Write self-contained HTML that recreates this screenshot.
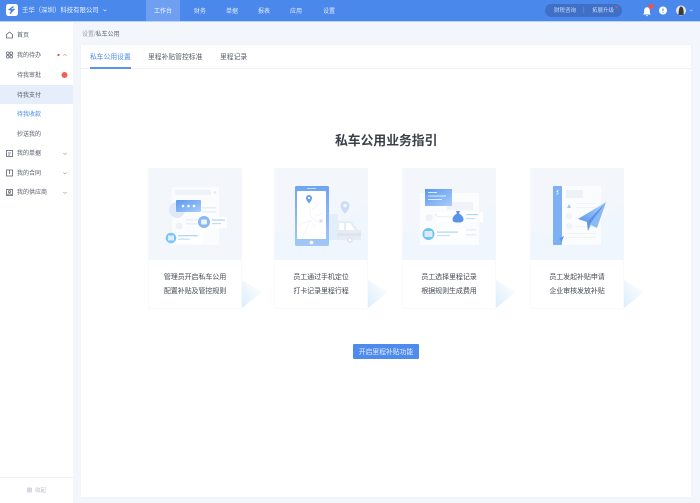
<!DOCTYPE html>
<html><head><meta charset="utf-8">
<style>
html,body{margin:0;padding:0;width:700px;height:503px;overflow:hidden;background:#f3f7fb}
body{font-family:"Liberation Sans","Noto Sans CJK SC",sans-serif;position:relative}
.t{position:absolute;white-space:nowrap;filter:blur(.25px)}
.c{text-align:center}
.b{position:absolute}
.s{font-size:6px;line-height:10px;color:#565d69;left:17px}
.n{font-size:6px;line-height:10px;color:#e4ecfb;top:7px;width:34px;text-align:center}
.g{font-size:7px;line-height:13.500px;color:#444953;text-align:center;width:94px;top:271px;letter-spacing:-.08px}
svg{position:absolute;left:0;top:0;filter:blur(.35px)}
</style></head><body>
<div class="b" style="left:0;top:0;width:700px;height:21px;background:#4a88ec"></div>
<div class="b" style="left:0;top:21px;width:700px;height:1px;background:#bcd4f7"></div>
<div class="b" style="left:146px;top:0;width:34px;height:21px;background:#6f9ff0"></div>
<div class="b" style="left:545px;top:4px;width:77px;height:13px;border-radius:7px;background:#3f70c6"></div>
<div class="b" style="left:0;top:22px;width:73px;height:481px;background:#fff"></div>
<div class="b" style="left:0;top:85px;width:73px;height:19px;background:#e6eefb"></div>
<div class="b" style="left:0;top:477px;width:73px;height:1px;background:#eef0f4"></div>
<div class="b" style="left:81px;top:45px;width:610px;height:452px;background:#fff;box-shadow:0 0 2px #e8edf4"></div>
<div class="b" style="left:81px;top:68px;width:610px;height:1px;background:#eef1f8"></div>
<div class="b" style="left:90px;top:67px;width:41px;height:1.500px;background:#5a93ee"></div>
<div class="b" style="left:353px;top:344px;width:66px;height:15px;background:#4f8bec;border-radius:1px"></div>

<svg width="700" height="503" viewBox="0 0 700 503">
<defs>
<linearGradient id="f" x1="0" y1="1" x2="1" y2="0"><stop offset="0" stop-color="#dcecfc"/><stop offset=".55" stop-color="#f1f8fe"/><stop offset="1" stop-color="#ffffff"/></linearGradient>
<linearGradient id="bl" x1="0" y1="0" x2="1" y2="1"><stop offset="0" stop-color="#5b97ef"/><stop offset="1" stop-color="#a9cdf8"/></linearGradient>
<linearGradient id="ph" x1="0" y1="0" x2="0" y2="1"><stop offset="0" stop-color="#6ea5f2"/><stop offset="1" stop-color="#a3c8f7"/></linearGradient>
<linearGradient id="pl" x1="1" y1="0" x2="0" y2="1"><stop offset="0" stop-color="#b8d7fa"/><stop offset="1" stop-color="#5d98ef"/></linearGradient>
</defs>

<!-- logo -->
<rect x="6" y="4" width="12" height="12" rx="2.500" fill="#fff"/>
<path d="M13.500 6.500L9.500 9.500L13 10L10 13.500M14.500 9L11 11.500" fill="none" stroke="#3f7fe6" stroke-width="1.400"/>
<path d="M103.500 9.500L105 11L106.500 9.500" fill="none" stroke="#dbe7fb" stroke-width=".7"/>

<!-- header right -->
<rect x="583.500" y="7" width=".6" height="6" fill="#6d92d6"/>
<circle cx="616.500" cy="7" r="1" fill="#f0524c"/>
<path d="M643 14.500h8c-1.200-1-1.200-2-1.200-4 0-2-1.200-3.300-2.800-3.300s-2.800 1.300-2.800 3.300c0 2 0 3-1.200 4zM646 15.200h2a1 1 0 0 1-2 0z" fill="#fff"/>
<circle cx="651" cy="6.500" r="2.600" fill="#f0524c"/>
<circle cx="663" cy="10.500" r="4" fill="#fff"/>
<path d="M663 8.500v2.600M663 12v.8" stroke="#4a88ec" stroke-width="1.100"/>
<circle cx="681" cy="10.500" r="5" fill="#e6e4e2"/>
<path d="M678.500 15c.2-3 .3-8 2.500-8.500 2.500 0 3 5 2.500 8.500z" fill="#3b3a3c"/>
<path d="M690 9.800L691.300 11L692.600 9.800" fill="none" stroke="#cfdffa" stroke-width=".6"/>

<!-- sidebar icons -->
<g fill="none" stroke="#5d6470" stroke-width=".8">
<path d="M6.500 34.500L9.500 32L12.500 34.500V38H6.500z"/>
<rect x="6.500" y="52" width="2.500" height="2.500" rx=".6"/><rect x="10" y="52" width="2.500" height="2.500" rx=".6"/><rect x="6.500" y="55.500" width="2.500" height="2.500" rx=".6"/><rect x="10" y="55.500" width="2.500" height="2.500" rx=".6"/>
<rect x="6.500" y="150.500" width="6" height="6"/><path d="M8 153h3M8 155h2"/>
<rect x="6.500" y="170" width="6" height="6"/><path d="M9.500 170v4"/>
<rect x="6.500" y="189.500" width="6" height="6"/><circle cx="9.500" cy="191.700" r="1"/><path d="M7.500 195c.5-1.500 3.500-1.500 4 0"/>
</g>
<circle cx="58.500" cy="55" r="1.100" fill="#ee4d47"/>
<g fill="none" stroke="#9aa1ad" stroke-width=".6">
<path d="M63.300 55.800L65 54.300L66.700 55.800"/>
<path d="M63.300 153L65 154.500L66.700 153"/>
<path d="M63.300 172.500L65 174L66.700 172.500"/>
<path d="M63.300 192L65 193.500L66.700 192"/>
</g>
<circle cx="64.500" cy="75" r="3" fill="#f0605a"/>
<rect x="27" y="487.500" width="5" height="5" rx=".8" fill="#d6d9e1"/>

<!-- cards -->
<g id="cards">
<path d="M242 308V280L262 292z" fill="url(#f)"/>
<path d="M368 308V280L388 292z" fill="url(#f)"/>
<path d="M496 308V280L516 292z" fill="url(#f)"/>
<path d="M624 308V280L644 292z" fill="url(#f)"/>
<rect x="148" y="168" width="94" height="141" fill="#fff"/>
<rect x="274" y="168" width="94" height="141" fill="#fff"/>
<rect x="402" y="168" width="94" height="141" fill="#fff"/>
<rect x="530" y="168" width="94" height="141" fill="#fff"/>
<rect x="148" y="168" width="94" height="92" fill="#f3f7fc"/>
<rect x="274" y="168" width="94" height="92" fill="#f3f7fc"/>
<rect x="402" y="168" width="94" height="92" fill="#f3f7fc"/>
<rect x="530" y="168" width="94" height="92" fill="#f3f7fc"/>
<path d="M274 260V232C310 240 345 225 368 203V260z" fill="#eff6fd"/>
<path d="M402 260V232C438 240 473 225 496 203V260z" fill="#eff6fd"/>
<path d="M530 260V232C566 240 601 225 624 203V260z" fill="#eff6fd"/>
<rect x="148.500" y="168.500" width="93" height="140" fill="none" stroke="#f5f7fb" stroke-width=".6"/>
<rect x="274.500" y="168.500" width="93" height="140" fill="none" stroke="#f5f7fb" stroke-width=".6"/>
<rect x="402.500" y="168.500" width="93" height="140" fill="none" stroke="#f5f7fb" stroke-width=".6"/>
<rect x="530.500" y="168.500" width="93" height="140" fill="none" stroke="#f5f7fb" stroke-width=".6"/>
</g>

<!-- illustration 1 -->
<rect x="172" y="187" width="47" height="58" fill="#fafcfe"/>
<rect x="175" y="190" width="36" height="5" fill="#eef3fa"/>
<circle cx="215" cy="192.500" r="1.500" fill="#e7eef8"/>
<circle cx="177" cy="210" r="8" fill="#dfe9f8"/>
<rect x="202" y="207" width="14" height="1.500" fill="#e7eff9"/><rect x="202" y="211" width="14" height="1.500" fill="#e7eff9"/>
<circle cx="179" cy="226" r="3.500" fill="#edf1f8"/>
<rect x="186" y="219" width="14" height="1.500" fill="#e9f0f9"/><rect x="186" y="223" width="14" height="1.500" fill="#e9f0f9"/>
<rect x="176" y="200" width="25" height="12" rx="1" fill="url(#bl)"/>
<circle cx="183" cy="206" r="1.300" fill="#fff"/><circle cx="188.500" cy="206" r="1.300" fill="#fff"/><circle cx="194" cy="206" r="1.300" fill="#fff"/>
<rect x="206" y="217" width="21" height="11" fill="#fff"/>
<rect x="212" y="219.500" width="13" height="1.200" fill="#a9d0f6"/><rect x="212" y="223" width="9" height="1.200" fill="#bfdcf8"/>
<circle cx="204" cy="222" r="6" fill="#8ab6f2"/><rect x="201" y="219.500" width="6" height="5" rx="1" fill="#e8f1fc"/>
<rect x="173" y="233" width="30" height="10" fill="#fff"/>
<rect x="178" y="235" width="20" height="1.300" fill="#b3d6f7"/><rect x="178" y="238.500" width="12" height="1.300" fill="#c5e0f9"/>
<circle cx="171" cy="238" r="5.300" fill="#78c7f6"/><rect x="168" y="235.500" width="6" height="5" rx=".6" fill="#dceefc"/>

<!-- illustration 2 -->
<rect x="329" y="214" width="9" height="26" fill="#e3eefb"/>
<path d="M337 221h14l7 9h3v10h-24z" fill="#e6ebf4"/>
<path d="M339 223h5v7h-5zM346 223h4l5 7h-9z" fill="#fff"/>
<rect x="337" y="233" width="24" height="3" fill="#dde4ef"/>
<circle cx="350" cy="240" r="3" fill="#dde5f1"/><circle cx="350" cy="240" r="1.200" fill="#fff"/>
<path d="M345 214c-3-3.500-4.500-6-4.500-8.500a4.500 4.500 0 0 1 9 0c0 2.500-1.500 5-4.500 8.500z" fill="#c9def6"/><circle cx="345" cy="205.500" r="1.800" fill="#f2f7fc"/>
<rect x="295" y="186" width="34" height="60" rx="1.500" fill="url(#ph)"/>
<rect x="297" y="191" width="29" height="48" rx=".8" fill="#fff"/>
<rect x="307" y="188" width="9" height=".8" fill="#dbe9fb"/>
<circle cx="311.500" cy="242.500" r="1.800" fill="#fff"/>
<g fill="none" stroke="#f0f4f9" stroke-width=".9"><path d="M298 226l12-6 6 8M309 205l2 12 8 6M312 210l8-8M316 216l9-4M302 238l8-18"/></g>
<path d="M309 203.500c-2-2.300-3-4-3-5.500a3 3 0 0 1 6 0c0 1.500-1 3.200-3 5.500z" fill="#6ba0ec"/><circle cx="309" cy="198" r="1.100" fill="#fff"/>
<circle cx="321" cy="221" r="1.700" fill="#d5e2f5"/>

<!-- illustration 3 -->
<rect x="420" y="193" width="59" height="52" fill="#fbfcfe"/>
<rect x="447" y="202" width="26" height="8" fill="#f0f4fa"/>
<circle cx="429" cy="217.500" r="3.500" fill="#eef1f7"/>
<rect x="435" y="214" width="12" height="1.500" fill="#e8eef7"/>
<rect x="466" y="229" width="10" height="1.500" fill="#e8eef7"/><rect x="466" y="234" width="10" height="1.500" fill="#e8eef7"/>
<rect x="425" y="189" width="27" height="17" fill="url(#bl)"/>
<rect x="428" y="192" width="9" height="1" fill="#dceafc"/><rect x="428" y="195.500" width="18" height="1" fill="#dceafc"/><rect x="428" y="199" width="14" height="1" fill="#dceafc"/>
<rect x="437" y="212" width="46" height="10" fill="#fff"/>
<rect x="437" y="216" width="14" height="1.200" fill="#edf1f7"/>
<rect x="466" y="214" width="12" height="1.200" fill="#b3d6f7"/><rect x="466" y="218" width="9" height="1.200" fill="#c5e0f9"/>
<path d="M456 211h4l-1 2.500c3 1.500 4.500 4 4.500 6 0 2-1.500 3-5.500 3s-5.500-1-5.500-3c0-2 1.500-4.500 4.500-6z" fill="#5a94e8"/>
<rect x="434" y="229" width="31" height="10" fill="#fff"/>
<rect x="437" y="231.500" width="21" height="1.200" fill="#a9d6f7"/><rect x="437" y="235" width="13" height="1.200" fill="#c5e0f9"/>
<circle cx="428.500" cy="234" r="6" fill="#70c3f5"/><rect x="424.500" y="231" width="8" height="6" rx=".8" fill="#d8ecfc"/>

<!-- illustration 4 -->
<rect x="553" y="186" width="48" height="59" rx="1" fill="#fbfcfe"/>
<rect x="553" y="186" width="9" height="59" rx="1" fill="#7fb0f3"/>
<path d="M559 189l-3 3 2 .5-2 3 3-2.500-1.500-.5z" fill="#fff"/>
<rect x="566" y="190" width="17" height="8" fill="#edf2f9"/>
<path d="M569 204l2 4h-4z" fill="#a3c4f2"/>
<circle cx="569" cy="216" r="3" fill="#f0f3f8"/><circle cx="569" cy="226" r="3" fill="#f0f3f8"/>
<g fill="#eff3f9"><rect x="576" y="203" width="20" height="1"/><rect x="576" y="207" width="20" height="1"/><rect x="576" y="226" width="20" height="1"/><rect x="566" y="237" width="30" height="1"/><rect x="566" y="233" width="30" height="1"/></g>
<path d="M564 236l-5 2.500 1.500 1.500v2.500l1.500-1.500z" fill="#5e97ea"/>
<path d="M606 202L578 219l9 3z" fill="url(#pl)"/>
<path d="M606 202L587 222l1 9 3-6 6 3z" fill="#8bb9f5"/>
<path d="M606 202L587 222l1 9 2-7z" fill="#5a94e8"/>
</svg>

<div class="t" style="left:22px;top:6px;font-size:6.400px;line-height:10px;color:#eef4fd">壬华（深圳）科技有限公司</div>
<div class="t n" style="left:146px;color:#fff">工作台</div>
<div class="t n" style="left:183px">财务</div>
<div class="t n" style="left:215px">单据</div>
<div class="t n" style="left:247px">报表</div>
<div class="t n" style="left:279px">应用</div>
<div class="t n" style="left:312px">设置</div>
<div class="t" style="left:554px;top:6px;font-size:5.500px;line-height:10px;color:#c8d9f5">财税咨询</div>
<div class="t" style="left:592px;top:6px;font-size:5.500px;line-height:10px;color:#c8d9f5">拓展升级</div>

<div class="t s" style="top:31px">首页</div>
<div class="t s" style="top:51px">我的待办</div>
<div class="t s" style="top:71px">待我审批</div>
<div class="t s" style="top:91px">待我支付</div>
<div class="t s" style="top:110px;color:#4a88ec">待我收款</div>
<div class="t s" style="top:130px">抄送我的</div>
<div class="t s" style="top:149px">我的单据</div>
<div class="t s" style="top:169px">我的合同</div>
<div class="t s" style="top:188px">我的供应商</div>
<div class="t" style="left:35px;top:486px;font-size:5.500px;line-height:10px;color:#b9bdc8">收起</div>

<div class="t" style="left:82px;top:29.500px;font-size:6px;line-height:10px;color:#9aa1ad">设置/<span style="color:#5d6470">私车公用</span></div>
<div class="t" style="left:90px;top:52px;font-size:6.800px;line-height:12px;color:#4a88ec">私车公用设置</div>
<div class="t" style="left:148px;top:52px;font-size:6.800px;line-height:12px;color:#555b66">里程补贴管控标准</div>
<div class="t" style="left:220px;top:52px;font-size:6.800px;line-height:12px;color:#555b66">里程记录</div>

<div class="t" style="left:335px;top:133px;font-size:12.800px;line-height:16px;color:#3b4048;font-weight:700">私车公用业务指引</div>

<div class="t g" style="left:148px">管理员开启私车公用<br>配置补贴及管控规则</div>
<div class="t g" style="left:274px">员工通过手机定位<br>打卡记录里程行程</div>
<div class="t g" style="left:402px">员工选择里程记录<br>根据规则生成费用</div>
<div class="t g" style="left:530px">员工发起补贴申请<br>企业审核发放补贴</div>

<div class="t c" style="left:353px;top:347px;width:66px;font-size:6.800px;line-height:11px;color:#e6effd">开启里程补贴功能</div>
</body></html>
